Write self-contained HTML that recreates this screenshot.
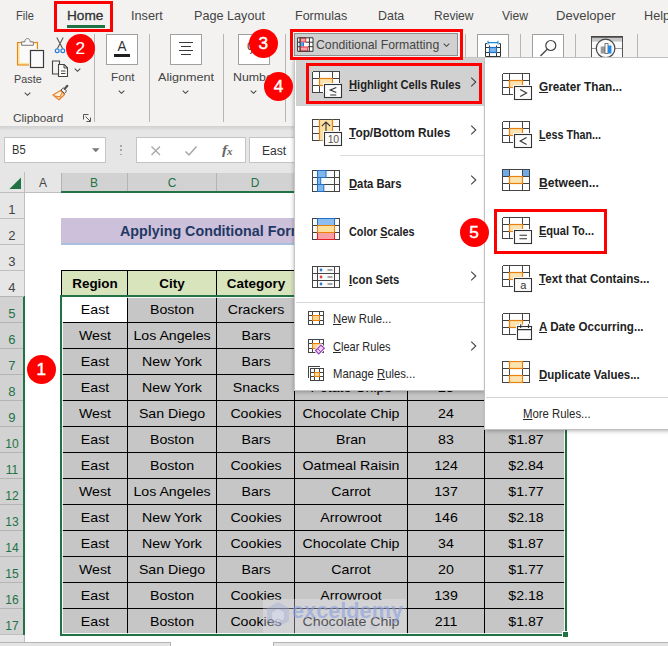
<!DOCTYPE html>
<html><head><meta charset="utf-8"><title>Excel - Conditional Formatting</title>
<style>
html,body{margin:0;padding:0;}
body{width:668px;height:646px;overflow:hidden;background:#fff;font-family:"Liberation Sans",sans-serif;}
#root{position:relative;width:668px;height:646px;overflow:hidden;background:#fff;}
.a{position:absolute;box-sizing:border-box;display:block;}
.t{position:absolute;white-space:nowrap;display:block;}
.t u{text-decoration:underline;text-underline-offset:1px;}

</style></head>
<body>
<div id="root">
<div class="a" style="left:0px;top:0px;width:668px;height:126px;background:#f3f2f1;"></div>
<div class="a" style="left:0px;top:126px;width:668px;height:5px;background:linear-gradient(#d0d0d0,#e6e6e6);"></div>
<span class="t" style="transform:scaleX(0.8703);transform-origin:0 50%;left:15.5px;top:7.2px;font-size:12.7px;line-height:18px;color:#444;font-weight:normal;">File</span>
<span class="t" style="transform:scaleX(1.0726);transform-origin:0 50%;left:66.5px;top:7.2px;font-size:12.7px;line-height:18px;color:#333;font-weight:normal;-webkit-text-stroke:0.3px #333;">Home</span>
<span class="t" style="transform:scaleX(1.0021);transform-origin:0 50%;left:131px;top:7.2px;font-size:12.7px;line-height:18px;color:#444;font-weight:normal;">Insert</span>
<span class="t" style="transform:scaleX(0.9965);transform-origin:0 50%;left:194.3px;top:7.2px;font-size:12.7px;line-height:18px;color:#444;font-weight:normal;">Page Layout</span>
<span class="t" style="transform:scaleX(0.9872);transform-origin:0 50%;left:295.3px;top:7.2px;font-size:12.7px;line-height:18px;color:#444;font-weight:normal;">Formulas</span>
<span class="t" style="transform:scaleX(0.9809);transform-origin:0 50%;left:377.5px;top:7.2px;font-size:12.7px;line-height:18px;color:#444;font-weight:normal;">Data</span>
<span class="t" style="transform:scaleX(0.9493);transform-origin:0 50%;left:433.5px;top:7.2px;font-size:12.7px;line-height:18px;color:#444;font-weight:normal;">Review</span>
<span class="t" style="transform:scaleX(0.9530);transform-origin:0 50%;left:502px;top:7.2px;font-size:12.7px;line-height:18px;color:#444;font-weight:normal;">View</span>
<span class="t" style="transform:scaleX(1.0286);transform-origin:0 50%;left:556.3px;top:7.2px;font-size:12.7px;line-height:18px;color:#444;font-weight:normal;">Developer</span>
<span class="t" style="transform:scaleX(0.9964);transform-origin:0 50%;left:644.3px;top:7.2px;font-size:12.7px;line-height:18px;color:#444;font-weight:normal;">Help</span>
<div class="a" style="left:67px;top:25px;width:38px;height:3px;background:#217346;"></div>
<div class="a" style="left:94px;top:34px;width:1px;height:88px;background:#b6b6b6;"></div>
<div class="a" style="left:149px;top:34px;width:1px;height:88px;background:#b6b6b6;"></div>
<div class="a" style="left:223px;top:34px;width:1px;height:88px;background:#b6b6b6;"></div>
<div class="a" style="left:285px;top:34px;width:1px;height:88px;background:#b6b6b6;"></div>
<div class="a" style="left:465px;top:34px;width:1px;height:24px;background:#b6b6b6;"></div>
<div class="a" style="left:520px;top:34px;width:1px;height:24px;background:#b6b6b6;"></div>
<div class="a" style="left:575px;top:34px;width:1px;height:24px;background:#b6b6b6;"></div>
<div class="a" style="left:637px;top:34px;width:1px;height:24px;background:#b6b6b6;"></div>
<svg class="a" style="left:14px;top:35px;" width="34" height="36" viewBox="0 0 34 36">
<rect x="3.5" y="7.5" width="20" height="22.5" fill="#fbe3a1" stroke="#e8890c" stroke-width="1.1"/>
<rect x="5.7" y="8.6" width="16.6" height="19.2" fill="#fafafa"/>
<path d="M7.6 10.3 V6.9 H10.8 C10.8 2.4 16.2 2.4 16.2 6.9 H19.4 V10.3 Z" fill="#f8f8f8" stroke="#7a7a7a" stroke-width="1"/>
<rect x="15" y="14" width="16" height="20" fill="#f6f5f4"/>
<rect x="16.5" y="15.5" width="13" height="17" fill="#fafafa" stroke="#3a3a3a" stroke-width="1.2"/>
</svg>
<span class="t" style="transform:scaleX(0.9181);transform-origin:0 50%;left:14.3px;top:70.0px;font-size:11.8px;line-height:18px;color:#444;font-weight:normal;">Paste</span>
<svg class="a" style="left:24.0px;top:92px;" width="7" height="4" viewBox="0 0 7 4"><path d="M0.7 0.7 L3.5 3.3 L6.3 0.7" fill="none" stroke="#4a4a4a" stroke-width="1.05"/></svg>
<svg class="a" style="left:53px;top:36px;" width="14" height="19" viewBox="0 0 14 19">
<path d="M3.8 1.5 L9.6 12.6 M10.2 1.5 L4.4 12.6" stroke="#555" stroke-width="1.1" fill="none"/>
<circle cx="4.2" cy="14.8" r="1.9" fill="none" stroke="#2b7cd3" stroke-width="1.2"/>
<circle cx="9.8" cy="14.8" r="1.9" fill="none" stroke="#2b7cd3" stroke-width="1.2"/>
</svg>
<svg class="a" style="left:51px;top:59px;" width="19" height="19" viewBox="0 0 19 19">
<path d="M7.5 15 H1.5 V2 H8.5 V5" fill="none" stroke="#444" stroke-width="1.1"/>
<path d="M7.5 5.5 H13.2 L16.5 8.8 V17.5 H7.5 Z" fill="#fafafa" stroke="#444" stroke-width="1.1"/>
<path d="M13 5.5 V9 H16.5" fill="none" stroke="#444" stroke-width="1"/>
<path d="M10 12 H14.5 M10 14.5 H14.5" stroke="#444" stroke-width="1"/>
</svg>
<svg class="a" style="left:74.0px;top:67.5px;" width="7" height="4" viewBox="0 0 7 4"><path d="M0.7 0.7 L3.5 3.3 L6.3 0.7" fill="none" stroke="#4a4a4a" stroke-width="1.05"/></svg>
<svg class="a" style="left:51px;top:84px;" width="19" height="18" viewBox="0 0 19 18">
<path d="M9.5 6.5 L13.5 10.5 L8 15.8 L2 11 Z" fill="#fdf1e2" stroke="#e8822a" stroke-width="1.3" stroke-linejoin="round"/>
<path d="M3.5 12 L9 12.8 L11 9" fill="none" stroke="#e8822a" stroke-width="1.1"/>
<path d="M10 6 L12.5 3.8 L15.5 7 L13.5 9.5 Z" fill="#f6f6f6" stroke="#555" stroke-width="1"/>
<path d="M13.8 4.8 L16.3 1.8" stroke="#555" stroke-width="2.2" stroke-linecap="round"/>
</svg>
<span class="t" style="transform:scaleX(0.9960);transform-origin:0 50%;left:13px;top:109.0px;font-size:11.8px;line-height:18px;color:#444;font-weight:normal;">Clipboard</span>
<svg class="a" style="left:82px;top:113px;" width="10" height="10" viewBox="0 0 10 10">
<path d="M1.5 6.5 V1.5 H6.5" fill="none" stroke="#555" stroke-width="1"/>
<path d="M3.5 3.5 L8.3 8.3 M8.5 4.5 V8.5 H4.5" fill="none" stroke="#555" stroke-width="1"/>
</svg>
<div class="a" style="left:106.2px;top:34.3px;width:31.5px;height:30.5px;background:#fff;border:1px solid #a0a0a0;"></div>
<span class="t" style="transform:translateX(-50%) scaleX(0.8986);transform-origin:50% 50%;left:122px;top:37.0px;font-size:15px;line-height:18px;color:#333;font-weight:normal;">A</span>
<div class="a" style="left:114.3px;top:53.5px;width:15.5px;height:3px;background:#1e1e1e;"></div>
<span class="t" style="transform:scaleX(0.9954);transform-origin:0 50%;left:110.5px;top:68.0px;font-size:11.8px;line-height:18px;color:#444;font-weight:normal;">Font</span>
<svg class="a" style="left:118.3px;top:90px;" width="7" height="4" viewBox="0 0 7 4"><path d="M0.7 0.7 L3.5 3.3 L6.3 0.7" fill="none" stroke="#4a4a4a" stroke-width="1.05"/></svg>
<div class="a" style="left:170.3px;top:34.3px;width:31.5px;height:30.5px;background:#fff;border:1px solid #a0a0a0;"></div>
<div class="a" style="left:179px;top:42px;width:14px;height:1px;background:#3a3a3a;"></div>
<div class="a" style="left:181px;top:46px;width:10px;height:1px;background:#3a3a3a;"></div>
<div class="a" style="left:179px;top:50px;width:14px;height:1px;background:#3a3a3a;"></div>
<div class="a" style="left:181px;top:54px;width:10px;height:1px;background:#3a3a3a;"></div>
<span class="t" style="transform:scaleX(1.0673);transform-origin:0 50%;left:158px;top:68.0px;font-size:11.8px;line-height:18px;color:#444;font-weight:normal;">Alignment</span>
<svg class="a" style="left:182.3px;top:90px;" width="7" height="4" viewBox="0 0 7 4"><path d="M0.7 0.7 L3.5 3.3 L6.3 0.7" fill="none" stroke="#4a4a4a" stroke-width="1.05"/></svg>
<div class="a" style="left:238.2px;top:34.3px;width:31.5px;height:30.5px;background:#fff;border:1px solid #a0a0a0;"></div>
<span class="t" style="transform:translateX(-50%) scaleX(0.9256);transform-origin:50% 50%;left:254px;top:40.0px;font-size:17px;line-height:18px;color:#444;font-weight:normal;">%</span>
<span class="t" style="transform:scaleX(1.0484);transform-origin:0 50%;left:232.5px;top:68.0px;font-size:11.8px;line-height:18px;color:#444;font-weight:normal;">Number</span>
<svg class="a" style="left:250.3px;top:90px;" width="7" height="4" viewBox="0 0 7 4"><path d="M0.7 0.7 L3.5 3.3 L6.3 0.7" fill="none" stroke="#4a4a4a" stroke-width="1.05"/></svg>
<div class="a" style="left:294px;top:33px;width:164px;height:23px;background:#d0d0d0;border:1px solid #8f8f8f;"></div>
<svg class="a" style="left:297px;top:36.5px;" width="17" height="15" viewBox="0 0 17 15">
<rect x="0.5" y="0.8" width="15.5" height="13.5" fill="#fff"/>
<rect x="3.2" y="1" width="5.6" height="4" fill="#f9a3ab" stroke="#e8202a" stroke-width="0.9"/>
<rect x="3.2" y="5.4" width="3.8" height="4" fill="#1e78d2"/>
<rect x="4.4" y="5.4" width="1.3" height="4" fill="#7fb6ee"/>
<rect x="3.2" y="10" width="7.6" height="4" fill="#f9a3ab" stroke="#e8202a" stroke-width="0.9"/>
<path d="M0.6 0.8 H16 V14.3 H0.6 Z M0.6 5.2 H3 M9 5.2 H16 M0.6 9.7 H3 M11 9.7 H16 M3 0.8 V14.3 M12.4 0.8 V14.3" fill="none" stroke="#333" stroke-width="1"/>
</svg>
<span class="t" style="transform:scaleX(1.0298);transform-origin:0 50%;left:316.3px;top:35.7px;font-size:11.9px;line-height:18px;color:#444;font-weight:normal;">Conditional Formatting</span>
<svg class="a" style="left:443.3px;top:43px;" width="7" height="4" viewBox="0 0 7 4"><path d="M0.7 0.7 L3.5 3.3 L6.3 0.7" fill="none" stroke="#4a4a4a" stroke-width="1.05"/></svg>
<div class="a" style="left:477px;top:34.3px;width:32px;height:30.5px;background:#fff;border:1px solid #a0a0a0;"></div>
<svg class="a" style="left:484px;top:38px;" width="18" height="20" viewBox="0 0 18 20">
<path d="M4 4.6 H14 M4 2.8 V6.4 M14 2.8 V6.4" stroke="#1e8ad6" stroke-width="1.1" fill="none"/>
<path d="M3 5.6 H1.5 V18.5 H16.5 V5.6 H15 M1.5 9.5 H16.5 M1.5 14.5 H16.5 M5.5 7.5 V18.5 M12.5 7.5 V18.5" fill="none" stroke="#333" stroke-width="1"/>
<rect x="5.5" y="9.5" width="7" height="5" fill="#7db4ec" stroke="#1e6fc8" stroke-width="1.2"/>
</svg>
<div class="a" style="left:532.3px;top:34.3px;width:31.5px;height:30.5px;background:#fff;border:1px solid #a0a0a0;"></div>
<svg class="a" style="left:538px;top:38px;" width="20" height="20" viewBox="0 0 20 20">
<circle cx="12.8" cy="7.5" r="5" fill="none" stroke="#444" stroke-width="1.2"/>
<path d="M9.2 11.2 L2.5 18" stroke="#444" stroke-width="1.3"/>
</svg>
<svg class="a" style="left:590px;top:36px;" width="34" height="24" viewBox="0 0 34 24">
<rect x="1.5" y="0.5" width="31" height="24" fill="#fafafa" stroke="#555" stroke-width="1"/>
<rect x="2" y="1" width="30" height="4.6" fill="#c6c6c6"/>
<path d="M1 0.9 H33" stroke="#444" stroke-width="1.6"/>
<path d="M2 12.5 H32" stroke="#9a9a9a" stroke-width="1"/>
<circle cx="15.6" cy="12.4" r="9.3" fill="#fafafa" stroke="#444" stroke-width="1.2"/>
<rect x="10.7" y="10.5" width="4.3" height="7" fill="#9a9a9a"/>
<rect x="15" y="7.6" width="3" height="9.9" fill="#fff" stroke="#555" stroke-width="0.8"/>
<rect x="18" y="9.5" width="3.4" height="8" fill="#1e8ae6"/>
</svg>
<div class="a" style="left:0px;top:130px;width:668px;height:42px;background:#e6e6e6;"></div>
<div class="a" style="left:4px;top:137px;width:102px;height:26px;background:#fff;border:1px solid #c4c4c4;"></div>
<span class="t" style="transform:scaleX(0.8973);transform-origin:0 50%;left:11.8px;top:141.4px;font-size:12.4px;line-height:18px;color:#333;font-weight:normal;">B5</span>
<svg class="a" style="left:91.5px;top:147.5px;" width="8" height="5" viewBox="0 0 8 5"><path d="M0 0.3 H7.6 L3.8 4.3 Z" fill="#777"/></svg>
<div class="a" style="left:120.4px;top:145.2px;width:1.4px;height:1.4px;background:#a8a8a8;"></div>
<div class="a" style="left:120.4px;top:149.4px;width:1.4px;height:1.4px;background:#a8a8a8;"></div>
<div class="a" style="left:120.4px;top:153.6px;width:1.4px;height:1.4px;background:#a8a8a8;"></div>
<div class="a" style="left:136px;top:137px;width:110px;height:26px;background:#fff;border:1px solid #c4c4c4;"></div>
<svg class="a" style="left:150px;top:144.5px;" width="12" height="12" viewBox="0 0 12 12"><path d="M1.5 1.5 L10 10 M10 1.5 L1.5 10" stroke="#a6a6a6" stroke-width="1.3" fill="none"/></svg>
<svg class="a" style="left:184px;top:144.5px;" width="14" height="12" viewBox="0 0 14 12"><path d="M1.5 6.5 L5 10 L12.5 1.5" stroke="#a6a6a6" stroke-width="1.5" fill="none"/></svg>
<span class="t" style="transform:scaleX(1.1971);transform-origin:0 50%;left:222.3px;top:140.6px;font-size:13px;line-height:18px;color:#666;font-weight:bold;font-family:'Liberation Serif',serif;"><i>f</i></span>
<span class="t" style="transform:scaleX(1.1000);transform-origin:0 50%;left:226.8px;top:142.5px;font-size:10px;line-height:18px;color:#666;font-weight:bold;font-family:'Liberation Serif',serif;"><i>x</i></span>
<div class="a" style="left:249px;top:137px;width:430px;height:26px;background:#fff;border:1px solid #c4c4c4;"></div>
<span class="t" style="transform:scaleX(0.9834);transform-origin:0 50%;left:261.5px;top:142.24px;font-size:12.3px;line-height:18px;color:#333;font-weight:normal;">East</span>
<div class="a" style="left:0px;top:172px;width:668px;height:21px;background:#e6e6e6;"></div>
<div class="a" style="left:0px;top:192px;width:668px;height:1px;background:#bfbfbf;"></div>
<div class="a" style="left:61px;top:173px;width:506px;height:18px;background:#d2d2d2;"></div>
<div class="a" style="left:61px;top:191px;width:506px;height:2px;background:#217346;"></div>
<svg class="a" style="left:8px;top:176px;" width="15" height="14" viewBox="0 0 15 14"><path d="M13 1.6 V13 H1.4 Z" fill="#217346"/></svg>
<span class="t" style="transform:translateX(-50%) scaleX(0.9700);transform-origin:50% 50%;left:43.2px;top:174.34px;font-size:12.3px;line-height:18px;color:#444;font-weight:normal;">A</span>
<div class="a" style="left:61px;top:173px;width:1px;height:18px;background:#b4b4b4;"></div>
<span class="t" style="transform:translateX(-50%) scaleX(0.9700);transform-origin:50% 50%;left:94.2px;top:174.34px;font-size:12.3px;line-height:18px;color:#217346;font-weight:normal;">B</span>
<div class="a" style="left:127px;top:173px;width:1px;height:18px;background:#b4b4b4;"></div>
<span class="t" style="transform:translateX(-50%) scaleX(0.9700);transform-origin:50% 50%;left:171.7px;top:174.34px;font-size:12.3px;line-height:18px;color:#217346;font-weight:normal;">C</span>
<div class="a" style="left:216px;top:173px;width:1px;height:18px;background:#b4b4b4;"></div>
<span class="t" style="transform:translateX(-50%) scaleX(0.9700);transform-origin:50% 50%;left:255.2px;top:174.34px;font-size:12.3px;line-height:18px;color:#217346;font-weight:normal;">D</span>
<div class="a" style="left:294px;top:173px;width:1px;height:18px;background:#b4b4b4;"></div>
<span class="t" style="transform:translateX(-50%) scaleX(0.9700);transform-origin:50% 50%;left:350.7px;top:174.34px;font-size:12.3px;line-height:18px;color:#217346;font-weight:normal;">E</span>
<div class="a" style="left:407px;top:173px;width:1px;height:18px;background:#b4b4b4;"></div>
<span class="t" style="transform:translateX(-50%) scaleX(0.9700);transform-origin:50% 50%;left:445.7px;top:174.34px;font-size:12.3px;line-height:18px;color:#217346;font-weight:normal;">F</span>
<div class="a" style="left:484px;top:173px;width:1px;height:18px;background:#b4b4b4;"></div>
<span class="t" style="transform:translateX(-50%) scaleX(0.9700);transform-origin:50% 50%;left:525.2px;top:174.34px;font-size:12.3px;line-height:18px;color:#217346;font-weight:normal;">G</span>
<div class="a" style="left:566px;top:173px;width:1px;height:18px;background:#b4b4b4;"></div>
<div class="a" style="left:0px;top:193px;width:24px;height:453px;background:#e6e6e6;"></div>
<div class="a" style="left:0px;top:296px;width:24px;height:339px;background:#d2d2d2;"></div>
<div class="a" style="left:24px;top:172px;width:1px;height:474px;background:#bfbfbf;"></div>
<div class="a" style="left:23px;top:296px;width:2px;height:339px;background:#217346;"></div>
<div class="a" style="left:0px;top:218px;width:24px;height:1px;background:#bfbfbf;"></div>
<span class="t" style="transform:translateX(-50%) scaleX(1.0600);transform-origin:50% 50%;left:11.8px;top:200.54px;font-size:12.3px;line-height:18px;color:#444;font-weight:normal;">1</span>
<div class="a" style="left:0px;top:244px;width:24px;height:1px;background:#bfbfbf;"></div>
<span class="t" style="transform:translateX(-50%) scaleX(1.0600);transform-origin:50% 50%;left:11.8px;top:226.54px;font-size:12.3px;line-height:18px;color:#444;font-weight:normal;">2</span>
<div class="a" style="left:0px;top:270px;width:24px;height:1px;background:#bfbfbf;"></div>
<span class="t" style="transform:translateX(-50%) scaleX(1.0600);transform-origin:50% 50%;left:11.8px;top:252.54px;font-size:12.3px;line-height:18px;color:#444;font-weight:normal;">3</span>
<div class="a" style="left:0px;top:296px;width:24px;height:1px;background:#b4b4b4;"></div>
<span class="t" style="transform:translateX(-50%) scaleX(1.0600);transform-origin:50% 50%;left:11.8px;top:278.54px;font-size:12.3px;line-height:18px;color:#444;font-weight:normal;">4</span>
<div class="a" style="left:0px;top:322px;width:23px;height:1px;background:#b4b4b4;"></div>
<span class="t" style="transform:translateX(-50%) scaleX(1.0600);transform-origin:50% 50%;left:11.8px;top:304.54px;font-size:12.3px;line-height:18px;color:#217346;font-weight:normal;">5</span>
<div class="a" style="left:0px;top:348px;width:23px;height:1px;background:#b4b4b4;"></div>
<span class="t" style="transform:translateX(-50%) scaleX(1.0600);transform-origin:50% 50%;left:11.8px;top:330.54px;font-size:12.3px;line-height:18px;color:#217346;font-weight:normal;">6</span>
<div class="a" style="left:0px;top:374px;width:23px;height:1px;background:#b4b4b4;"></div>
<span class="t" style="transform:translateX(-50%) scaleX(1.0600);transform-origin:50% 50%;left:11.8px;top:356.54px;font-size:12.3px;line-height:18px;color:#217346;font-weight:normal;">7</span>
<div class="a" style="left:0px;top:400px;width:23px;height:1px;background:#b4b4b4;"></div>
<span class="t" style="transform:translateX(-50%) scaleX(1.0600);transform-origin:50% 50%;left:11.8px;top:382.54px;font-size:12.3px;line-height:18px;color:#217346;font-weight:normal;">8</span>
<div class="a" style="left:0px;top:426px;width:23px;height:1px;background:#b4b4b4;"></div>
<span class="t" style="transform:translateX(-50%) scaleX(1.0600);transform-origin:50% 50%;left:11.8px;top:408.54px;font-size:12.3px;line-height:18px;color:#217346;font-weight:normal;">9</span>
<div class="a" style="left:0px;top:452px;width:23px;height:1px;background:#b4b4b4;"></div>
<span class="t" style="transform:translateX(-50%) scaleX(0.9800);transform-origin:50% 50%;left:12.4px;top:434.54px;font-size:12.3px;line-height:18px;color:#217346;font-weight:normal;">10</span>
<div class="a" style="left:0px;top:478px;width:23px;height:1px;background:#b4b4b4;"></div>
<span class="t" style="transform:translateX(-50%) scaleX(0.9800);transform-origin:50% 50%;left:12.4px;top:460.54px;font-size:12.3px;line-height:18px;color:#217346;font-weight:normal;">11</span>
<div class="a" style="left:0px;top:504px;width:23px;height:1px;background:#b4b4b4;"></div>
<span class="t" style="transform:translateX(-50%) scaleX(0.9800);transform-origin:50% 50%;left:12.4px;top:486.54px;font-size:12.3px;line-height:18px;color:#217346;font-weight:normal;">12</span>
<div class="a" style="left:0px;top:530px;width:23px;height:1px;background:#b4b4b4;"></div>
<span class="t" style="transform:translateX(-50%) scaleX(0.9800);transform-origin:50% 50%;left:12.4px;top:512.54px;font-size:12.3px;line-height:18px;color:#217346;font-weight:normal;">13</span>
<div class="a" style="left:0px;top:556px;width:23px;height:1px;background:#b4b4b4;"></div>
<span class="t" style="transform:translateX(-50%) scaleX(0.9800);transform-origin:50% 50%;left:12.4px;top:538.54px;font-size:12.3px;line-height:18px;color:#217346;font-weight:normal;">14</span>
<div class="a" style="left:0px;top:582px;width:23px;height:1px;background:#b4b4b4;"></div>
<span class="t" style="transform:translateX(-50%) scaleX(0.9800);transform-origin:50% 50%;left:12.4px;top:564.54px;font-size:12.3px;line-height:18px;color:#217346;font-weight:normal;">15</span>
<div class="a" style="left:0px;top:608px;width:23px;height:1px;background:#b4b4b4;"></div>
<span class="t" style="transform:translateX(-50%) scaleX(0.9800);transform-origin:50% 50%;left:12.4px;top:590.54px;font-size:12.3px;line-height:18px;color:#217346;font-weight:normal;">16</span>
<div class="a" style="left:0px;top:634px;width:23px;height:1px;background:#bfbfbf;"></div>
<span class="t" style="transform:translateX(-50%) scaleX(0.9800);transform-origin:50% 50%;left:12.4px;top:616.54px;font-size:12.3px;line-height:18px;color:#217346;font-weight:normal;">17</span>
<div class="a" style="left:0px;top:660px;width:24px;height:1px;background:#bfbfbf;"></div>
<div class="a" style="left:61px;top:218px;width:506px;height:25px;background:#ccc0da;"></div>
<div class="a" style="left:61px;top:243px;width:506px;height:2px;background:#a9c0de;"></div>
<span class="t" style="transform:scaleX(0.9221);transform-origin:0 50%;left:119.6px;top:222.1px;font-size:15.5px;line-height:18px;color:#1f3864;font-weight:bold;">Applying Conditional Formatting Based on Another Cell</span>
<div class="a" style="left:61px;top:270px;width:505px;height:26px;background:#d8e4bc;"></div>
<div class="a" style="left:61px;top:296px;width:505px;height:339px;background:#c6c6c6;"></div>
<div class="a" style="left:62px;top:297px;width:65px;height:25px;background:#fff;"></div>
<div class="a" style="left:61px;top:270px;width:505px;height:1px;background:#000;"></div>
<div class="a" style="left:61px;top:296px;width:505px;height:1px;background:#000;"></div>
<div class="a" style="left:61px;top:322px;width:505px;height:1px;background:#000;"></div>
<div class="a" style="left:61px;top:348px;width:505px;height:1px;background:#000;"></div>
<div class="a" style="left:61px;top:374px;width:505px;height:1px;background:#000;"></div>
<div class="a" style="left:61px;top:400px;width:505px;height:1px;background:#000;"></div>
<div class="a" style="left:61px;top:426px;width:505px;height:1px;background:#000;"></div>
<div class="a" style="left:61px;top:452px;width:505px;height:1px;background:#000;"></div>
<div class="a" style="left:61px;top:478px;width:505px;height:1px;background:#000;"></div>
<div class="a" style="left:61px;top:504px;width:505px;height:1px;background:#000;"></div>
<div class="a" style="left:61px;top:530px;width:505px;height:1px;background:#000;"></div>
<div class="a" style="left:61px;top:556px;width:505px;height:1px;background:#000;"></div>
<div class="a" style="left:61px;top:582px;width:505px;height:1px;background:#000;"></div>
<div class="a" style="left:61px;top:608px;width:505px;height:1px;background:#000;"></div>
<div class="a" style="left:61px;top:634px;width:505px;height:1px;background:#000;"></div>
<div class="a" style="left:61px;top:270px;width:1px;height:365px;background:#000;"></div>
<div class="a" style="left:127px;top:270px;width:1px;height:365px;background:#000;"></div>
<div class="a" style="left:216px;top:270px;width:1px;height:365px;background:#000;"></div>
<div class="a" style="left:294px;top:270px;width:1px;height:365px;background:#000;"></div>
<div class="a" style="left:407px;top:270px;width:1px;height:365px;background:#000;"></div>
<div class="a" style="left:484px;top:270px;width:1px;height:365px;background:#000;"></div>
<div class="a" style="left:565px;top:270px;width:1px;height:365px;background:#000;"></div>
<span class="t" style="transform:translateX(-50%) scaleX(1.0200);transform-origin:50% 50%;left:94.8px;top:275.33px;font-size:13.2px;line-height:18px;color:#000;font-weight:bold;">Region</span>
<span class="t" style="transform:translateX(-50%) scaleX(1.0200);transform-origin:50% 50%;left:172.3px;top:275.33px;font-size:13.2px;line-height:18px;color:#000;font-weight:bold;">City</span>
<span class="t" style="transform:translateX(-50%) scaleX(1.0200);transform-origin:50% 50%;left:255.8px;top:275.33px;font-size:13.2px;line-height:18px;color:#000;font-weight:bold;">Category</span>
<span class="t" style="transform:translateX(-50%) scaleX(1.0200);transform-origin:50% 50%;left:351.3px;top:275.33px;font-size:13.2px;line-height:18px;color:#000;font-weight:bold;">Product</span>
<span class="t" style="transform:translateX(-50%) scaleX(1.0200);transform-origin:50% 50%;left:446.3px;top:275.33px;font-size:13.2px;line-height:18px;color:#000;font-weight:bold;">Quantity</span>
<span class="t" style="transform:translateX(-50%) scaleX(1.0200);transform-origin:50% 50%;left:525.8px;top:275.33px;font-size:13.2px;line-height:18px;color:#000;font-weight:bold;">Unit Price</span>
<span class="t" style="transform:translateX(-50%) scaleX(1.0750);transform-origin:50% 50%;left:94.8px;top:301.13px;font-size:13.2px;line-height:18px;color:#000;font-weight:normal;">East</span>
<span class="t" style="transform:translateX(-50%) scaleX(1.0750);transform-origin:50% 50%;left:172.3px;top:301.13px;font-size:13.2px;line-height:18px;color:#000;font-weight:normal;">Boston</span>
<span class="t" style="transform:translateX(-50%) scaleX(1.0750);transform-origin:50% 50%;left:255.8px;top:301.13px;font-size:13.2px;line-height:18px;color:#000;font-weight:normal;">Crackers</span>
<span class="t" style="transform:translateX(-50%) scaleX(1.0750);transform-origin:50% 50%;left:351.3px;top:301.13px;font-size:13.2px;line-height:18px;color:#000;font-weight:normal;">Whole Wheat</span>
<span class="t" style="transform:translateX(-50%) scaleX(1.0750);transform-origin:50% 50%;left:446.3px;top:301.13px;font-size:13.2px;line-height:18px;color:#000;font-weight:normal;">30</span>
<span class="t" style="transform:translateX(-50%) scaleX(1.0750);transform-origin:50% 50%;left:525.8px;top:301.13px;font-size:13.2px;line-height:18px;color:#000;font-weight:normal;">$3.49</span>
<span class="t" style="transform:translateX(-50%) scaleX(1.0750);transform-origin:50% 50%;left:94.8px;top:327.13px;font-size:13.2px;line-height:18px;color:#000;font-weight:normal;">West</span>
<span class="t" style="transform:translateX(-50%) scaleX(1.0750);transform-origin:50% 50%;left:172.3px;top:327.13px;font-size:13.2px;line-height:18px;color:#000;font-weight:normal;">Los Angeles</span>
<span class="t" style="transform:translateX(-50%) scaleX(1.0750);transform-origin:50% 50%;left:255.8px;top:327.13px;font-size:13.2px;line-height:18px;color:#000;font-weight:normal;">Bars</span>
<span class="t" style="transform:translateX(-50%) scaleX(1.0750);transform-origin:50% 50%;left:351.3px;top:327.13px;font-size:13.2px;line-height:18px;color:#000;font-weight:normal;">Carrot</span>
<span class="t" style="transform:translateX(-50%) scaleX(1.0750);transform-origin:50% 50%;left:446.3px;top:327.13px;font-size:13.2px;line-height:18px;color:#000;font-weight:normal;">40</span>
<span class="t" style="transform:translateX(-50%) scaleX(1.0750);transform-origin:50% 50%;left:525.8px;top:327.13px;font-size:13.2px;line-height:18px;color:#000;font-weight:normal;">$1.77</span>
<span class="t" style="transform:translateX(-50%) scaleX(1.0750);transform-origin:50% 50%;left:94.8px;top:353.13px;font-size:13.2px;line-height:18px;color:#000;font-weight:normal;">East</span>
<span class="t" style="transform:translateX(-50%) scaleX(1.0750);transform-origin:50% 50%;left:172.3px;top:353.13px;font-size:13.2px;line-height:18px;color:#000;font-weight:normal;">New York</span>
<span class="t" style="transform:translateX(-50%) scaleX(1.0750);transform-origin:50% 50%;left:255.8px;top:353.13px;font-size:13.2px;line-height:18px;color:#000;font-weight:normal;">Bars</span>
<span class="t" style="transform:translateX(-50%) scaleX(1.0750);transform-origin:50% 50%;left:351.3px;top:353.13px;font-size:13.2px;line-height:18px;color:#000;font-weight:normal;">Bran</span>
<span class="t" style="transform:translateX(-50%) scaleX(1.0750);transform-origin:50% 50%;left:446.3px;top:353.13px;font-size:13.2px;line-height:18px;color:#000;font-weight:normal;">51</span>
<span class="t" style="transform:translateX(-50%) scaleX(1.0750);transform-origin:50% 50%;left:525.8px;top:353.13px;font-size:13.2px;line-height:18px;color:#000;font-weight:normal;">$1.87</span>
<span class="t" style="transform:translateX(-50%) scaleX(1.0750);transform-origin:50% 50%;left:94.8px;top:379.13px;font-size:13.2px;line-height:18px;color:#000;font-weight:normal;">East</span>
<span class="t" style="transform:translateX(-50%) scaleX(1.0750);transform-origin:50% 50%;left:172.3px;top:379.13px;font-size:13.2px;line-height:18px;color:#000;font-weight:normal;">New York</span>
<span class="t" style="transform:translateX(-50%) scaleX(1.0750);transform-origin:50% 50%;left:255.8px;top:379.13px;font-size:13.2px;line-height:18px;color:#000;font-weight:normal;">Snacks</span>
<span class="t" style="transform:translateX(-50%) scaleX(1.0750);transform-origin:50% 50%;left:351.3px;top:379.13px;font-size:13.2px;line-height:18px;color:#000;font-weight:normal;">Potato Chips</span>
<span class="t" style="transform:translateX(-50%) scaleX(1.0750);transform-origin:50% 50%;left:446.3px;top:379.13px;font-size:13.2px;line-height:18px;color:#000;font-weight:normal;">23</span>
<span class="t" style="transform:translateX(-50%) scaleX(1.0750);transform-origin:50% 50%;left:525.8px;top:379.13px;font-size:13.2px;line-height:18px;color:#000;font-weight:normal;">$1.68</span>
<span class="t" style="transform:translateX(-50%) scaleX(1.0750);transform-origin:50% 50%;left:94.8px;top:405.13px;font-size:13.2px;line-height:18px;color:#000;font-weight:normal;">West</span>
<span class="t" style="transform:translateX(-50%) scaleX(1.0750);transform-origin:50% 50%;left:172.3px;top:405.13px;font-size:13.2px;line-height:18px;color:#000;font-weight:normal;">San Diego</span>
<span class="t" style="transform:translateX(-50%) scaleX(1.0750);transform-origin:50% 50%;left:255.8px;top:405.13px;font-size:13.2px;line-height:18px;color:#000;font-weight:normal;">Cookies</span>
<span class="t" style="transform:translateX(-50%) scaleX(1.0750);transform-origin:50% 50%;left:351.3px;top:405.13px;font-size:13.2px;line-height:18px;color:#000;font-weight:normal;">Chocolate Chip</span>
<span class="t" style="transform:translateX(-50%) scaleX(1.0750);transform-origin:50% 50%;left:446.3px;top:405.13px;font-size:13.2px;line-height:18px;color:#000;font-weight:normal;">24</span>
<span class="t" style="transform:translateX(-50%) scaleX(1.0750);transform-origin:50% 50%;left:525.8px;top:405.13px;font-size:13.2px;line-height:18px;color:#000;font-weight:normal;">$1.87</span>
<span class="t" style="transform:translateX(-50%) scaleX(1.0750);transform-origin:50% 50%;left:94.8px;top:431.13px;font-size:13.2px;line-height:18px;color:#000;font-weight:normal;">East</span>
<span class="t" style="transform:translateX(-50%) scaleX(1.0750);transform-origin:50% 50%;left:172.3px;top:431.13px;font-size:13.2px;line-height:18px;color:#000;font-weight:normal;">Boston</span>
<span class="t" style="transform:translateX(-50%) scaleX(1.0750);transform-origin:50% 50%;left:255.8px;top:431.13px;font-size:13.2px;line-height:18px;color:#000;font-weight:normal;">Bars</span>
<span class="t" style="transform:translateX(-50%) scaleX(1.0750);transform-origin:50% 50%;left:351.3px;top:431.13px;font-size:13.2px;line-height:18px;color:#000;font-weight:normal;">Bran</span>
<span class="t" style="transform:translateX(-50%) scaleX(1.0750);transform-origin:50% 50%;left:446.3px;top:431.13px;font-size:13.2px;line-height:18px;color:#000;font-weight:normal;">83</span>
<span class="t" style="transform:translateX(-50%) scaleX(1.0750);transform-origin:50% 50%;left:525.8px;top:431.13px;font-size:13.2px;line-height:18px;color:#000;font-weight:normal;">$1.87</span>
<span class="t" style="transform:translateX(-50%) scaleX(1.0750);transform-origin:50% 50%;left:94.8px;top:457.13px;font-size:13.2px;line-height:18px;color:#000;font-weight:normal;">East</span>
<span class="t" style="transform:translateX(-50%) scaleX(1.0750);transform-origin:50% 50%;left:172.3px;top:457.13px;font-size:13.2px;line-height:18px;color:#000;font-weight:normal;">Boston</span>
<span class="t" style="transform:translateX(-50%) scaleX(1.0750);transform-origin:50% 50%;left:255.8px;top:457.13px;font-size:13.2px;line-height:18px;color:#000;font-weight:normal;">Cookies</span>
<span class="t" style="transform:translateX(-50%) scaleX(1.0750);transform-origin:50% 50%;left:351.3px;top:457.13px;font-size:13.2px;line-height:18px;color:#000;font-weight:normal;">Oatmeal Raisin</span>
<span class="t" style="transform:translateX(-50%) scaleX(1.0750);transform-origin:50% 50%;left:446.3px;top:457.13px;font-size:13.2px;line-height:18px;color:#000;font-weight:normal;">124</span>
<span class="t" style="transform:translateX(-50%) scaleX(1.0750);transform-origin:50% 50%;left:525.8px;top:457.13px;font-size:13.2px;line-height:18px;color:#000;font-weight:normal;">$2.84</span>
<span class="t" style="transform:translateX(-50%) scaleX(1.0750);transform-origin:50% 50%;left:94.8px;top:483.13px;font-size:13.2px;line-height:18px;color:#000;font-weight:normal;">West</span>
<span class="t" style="transform:translateX(-50%) scaleX(1.0750);transform-origin:50% 50%;left:172.3px;top:483.13px;font-size:13.2px;line-height:18px;color:#000;font-weight:normal;">Los Angeles</span>
<span class="t" style="transform:translateX(-50%) scaleX(1.0750);transform-origin:50% 50%;left:255.8px;top:483.13px;font-size:13.2px;line-height:18px;color:#000;font-weight:normal;">Bars</span>
<span class="t" style="transform:translateX(-50%) scaleX(1.0750);transform-origin:50% 50%;left:351.3px;top:483.13px;font-size:13.2px;line-height:18px;color:#000;font-weight:normal;">Carrot</span>
<span class="t" style="transform:translateX(-50%) scaleX(1.0750);transform-origin:50% 50%;left:446.3px;top:483.13px;font-size:13.2px;line-height:18px;color:#000;font-weight:normal;">137</span>
<span class="t" style="transform:translateX(-50%) scaleX(1.0750);transform-origin:50% 50%;left:525.8px;top:483.13px;font-size:13.2px;line-height:18px;color:#000;font-weight:normal;">$1.77</span>
<span class="t" style="transform:translateX(-50%) scaleX(1.0750);transform-origin:50% 50%;left:94.8px;top:509.13px;font-size:13.2px;line-height:18px;color:#000;font-weight:normal;">East</span>
<span class="t" style="transform:translateX(-50%) scaleX(1.0750);transform-origin:50% 50%;left:172.3px;top:509.13px;font-size:13.2px;line-height:18px;color:#000;font-weight:normal;">New York</span>
<span class="t" style="transform:translateX(-50%) scaleX(1.0750);transform-origin:50% 50%;left:255.8px;top:509.13px;font-size:13.2px;line-height:18px;color:#000;font-weight:normal;">Cookies</span>
<span class="t" style="transform:translateX(-50%) scaleX(1.0750);transform-origin:50% 50%;left:351.3px;top:509.13px;font-size:13.2px;line-height:18px;color:#000;font-weight:normal;">Arrowroot</span>
<span class="t" style="transform:translateX(-50%) scaleX(1.0750);transform-origin:50% 50%;left:446.3px;top:509.13px;font-size:13.2px;line-height:18px;color:#000;font-weight:normal;">146</span>
<span class="t" style="transform:translateX(-50%) scaleX(1.0750);transform-origin:50% 50%;left:525.8px;top:509.13px;font-size:13.2px;line-height:18px;color:#000;font-weight:normal;">$2.18</span>
<span class="t" style="transform:translateX(-50%) scaleX(1.0750);transform-origin:50% 50%;left:94.8px;top:535.13px;font-size:13.2px;line-height:18px;color:#000;font-weight:normal;">East</span>
<span class="t" style="transform:translateX(-50%) scaleX(1.0750);transform-origin:50% 50%;left:172.3px;top:535.13px;font-size:13.2px;line-height:18px;color:#000;font-weight:normal;">New York</span>
<span class="t" style="transform:translateX(-50%) scaleX(1.0750);transform-origin:50% 50%;left:255.8px;top:535.13px;font-size:13.2px;line-height:18px;color:#000;font-weight:normal;">Cookies</span>
<span class="t" style="transform:translateX(-50%) scaleX(1.0750);transform-origin:50% 50%;left:351.3px;top:535.13px;font-size:13.2px;line-height:18px;color:#000;font-weight:normal;">Chocolate Chip</span>
<span class="t" style="transform:translateX(-50%) scaleX(1.0750);transform-origin:50% 50%;left:446.3px;top:535.13px;font-size:13.2px;line-height:18px;color:#000;font-weight:normal;">34</span>
<span class="t" style="transform:translateX(-50%) scaleX(1.0750);transform-origin:50% 50%;left:525.8px;top:535.13px;font-size:13.2px;line-height:18px;color:#000;font-weight:normal;">$1.87</span>
<span class="t" style="transform:translateX(-50%) scaleX(1.0750);transform-origin:50% 50%;left:94.8px;top:561.13px;font-size:13.2px;line-height:18px;color:#000;font-weight:normal;">West</span>
<span class="t" style="transform:translateX(-50%) scaleX(1.0750);transform-origin:50% 50%;left:172.3px;top:561.13px;font-size:13.2px;line-height:18px;color:#000;font-weight:normal;">San Diego</span>
<span class="t" style="transform:translateX(-50%) scaleX(1.0750);transform-origin:50% 50%;left:255.8px;top:561.13px;font-size:13.2px;line-height:18px;color:#000;font-weight:normal;">Bars</span>
<span class="t" style="transform:translateX(-50%) scaleX(1.0750);transform-origin:50% 50%;left:351.3px;top:561.13px;font-size:13.2px;line-height:18px;color:#000;font-weight:normal;">Carrot</span>
<span class="t" style="transform:translateX(-50%) scaleX(1.0750);transform-origin:50% 50%;left:446.3px;top:561.13px;font-size:13.2px;line-height:18px;color:#000;font-weight:normal;">20</span>
<span class="t" style="transform:translateX(-50%) scaleX(1.0750);transform-origin:50% 50%;left:525.8px;top:561.13px;font-size:13.2px;line-height:18px;color:#000;font-weight:normal;">$1.77</span>
<span class="t" style="transform:translateX(-50%) scaleX(1.0750);transform-origin:50% 50%;left:94.8px;top:587.13px;font-size:13.2px;line-height:18px;color:#000;font-weight:normal;">East</span>
<span class="t" style="transform:translateX(-50%) scaleX(1.0750);transform-origin:50% 50%;left:172.3px;top:587.13px;font-size:13.2px;line-height:18px;color:#000;font-weight:normal;">Boston</span>
<span class="t" style="transform:translateX(-50%) scaleX(1.0750);transform-origin:50% 50%;left:255.8px;top:587.13px;font-size:13.2px;line-height:18px;color:#000;font-weight:normal;">Cookies</span>
<span class="t" style="transform:translateX(-50%) scaleX(1.0750);transform-origin:50% 50%;left:351.3px;top:587.13px;font-size:13.2px;line-height:18px;color:#000;font-weight:normal;">Arrowroot</span>
<span class="t" style="transform:translateX(-50%) scaleX(1.0750);transform-origin:50% 50%;left:446.3px;top:587.13px;font-size:13.2px;line-height:18px;color:#000;font-weight:normal;">139</span>
<span class="t" style="transform:translateX(-50%) scaleX(1.0750);transform-origin:50% 50%;left:525.8px;top:587.13px;font-size:13.2px;line-height:18px;color:#000;font-weight:normal;">$2.18</span>
<span class="t" style="transform:translateX(-50%) scaleX(1.0750);transform-origin:50% 50%;left:94.8px;top:613.13px;font-size:13.2px;line-height:18px;color:#000;font-weight:normal;">East</span>
<span class="t" style="transform:translateX(-50%) scaleX(1.0750);transform-origin:50% 50%;left:172.3px;top:613.13px;font-size:13.2px;line-height:18px;color:#000;font-weight:normal;">Boston</span>
<span class="t" style="transform:translateX(-50%) scaleX(1.0750);transform-origin:50% 50%;left:255.8px;top:613.13px;font-size:13.2px;line-height:18px;color:#000;font-weight:normal;">Cookies</span>
<span class="t" style="transform:translateX(-50%) scaleX(1.0750);transform-origin:50% 50%;left:351.3px;top:613.13px;font-size:13.2px;line-height:18px;color:#000;font-weight:normal;">Chocolate Chip</span>
<span class="t" style="transform:translateX(-50%) scaleX(1.0750);transform-origin:50% 50%;left:446.3px;top:613.13px;font-size:13.2px;line-height:18px;color:#000;font-weight:normal;">211</span>
<span class="t" style="transform:translateX(-50%) scaleX(1.0750);transform-origin:50% 50%;left:525.8px;top:613.13px;font-size:13.2px;line-height:18px;color:#000;font-weight:normal;">$1.87</span>
<div class="a" style="left:60px;top:295px;width:507px;height:341px;border:2px solid #217346;"></div>
<div class="a" style="left:62px;top:297px;width:503px;height:337px;border:1px solid rgba(255,255,255,0.85);"></div>
<div class="a" style="left:562px;top:631px;width:7px;height:7px;background:#217346;border:1px solid #fff;"></div>
<div class="a" style="left:262.5px;top:598.5px;width:143px;height:35px;background:rgba(236,238,246,0.33);"></div>
<svg class="a" style="left:265px;top:600px;" width="27" height="30" viewBox="0 0 27 30">
<path d="M13 2 L24 8 V21 L13 27 L2 21 V8 Z" fill="rgba(160,172,212,0.4)"/>
<path d="M13 9 L19 12.5 V19 L13 22.5 L7 19 V12.5 Z" fill="rgba(225,228,240,0.6)"/>
</svg>
<span class="t" style="transform:scaleX(0.9864);transform-origin:0 50%;left:292.3px;top:598.0px;font-size:22px;line-height:26px;color:rgba(140,158,222,0.62);font-weight:bold;">exceldemy</span>
<span class="t" style="transform:scaleX(1.2778);transform-origin:0 50%;left:307px;top:622.5px;font-size:6.5px;line-height:8px;color:rgba(150,165,215,0.3);font-weight:normal;">EXCEL · DATA · BI</span>
<div class="a" style="left:0px;top:642px;width:171px;height:4px;background:#e4e4e4;border-top:1px solid #b4b4b4;border-right:1px solid #b4b4b4;"></div>
<div class="a" style="left:273px;top:642px;width:395px;height:4px;background:#e4e4e4;border-top:1px solid #b4b4b4;border-left:1px solid #b4b4b4;"></div>
<div class="a" style="left:294px;top:57px;width:192px;height:333.5px;background:#fff;border:1px solid #c6c6c6;box-shadow:-1px 2px 4px -1px rgba(0,0,0,0.3);"></div>
<div class="a" style="left:296px;top:58px;width:189px;height:47.5px;background:#d1d1d1;"></div>
<svg class="a" style="left:312px;top:71px;" width="32" height="28" viewBox="0 0 32 28"><rect x="0.5" y="0.5" width="27.0" height="21.0" fill="#fff"/><path d="M0.5 0.5 V21.5 M7.5 0.5 V21.5 M20.5 0.5 V21.5 M27.5 0.5 V21.5 M0.5 0.5 H27.5 M0.5 7.5 H27.5 M0.5 14.5 H27.5 M0.5 21.5 H27.5 " stroke="#444" stroke-width="1" fill="none" shape-rendering="crispEdges"/><rect x="7.5" y="7.5" width="13" height="7" fill="#fce4b0" stroke="#e8820c" stroke-width="1.2"/><rect x="11" y="12" width="17" height="10" fill="#fff"/><rect x="12.5" y="13.5" width="17" height="13" fill="#fcfcfc" stroke="#333" stroke-width="1.1"/><path d="M24.3 16.5 L18.2 19 L24.3 21.5 M18.2 24 H24.3" fill="none" stroke="#333" stroke-width="1.1"/></svg>
<span class="t" style="transform:scaleX(0.9391);transform-origin:0 50%;left:348.9px;top:75.6px;font-size:11.9px;line-height:18px;color:#222;font-weight:bold;"><u>H</u>ighlight Cells Rules</span>
<svg class="a" style="left:470.0px;top:76px;" width="8" height="12" viewBox="0 0 8 12"><path d="M1.2 1.6 L5.8 6 L1.2 10.4" fill="none" stroke="#444" stroke-width="1.1"/></svg>
<svg class="a" style="left:312px;top:119px;" width="32" height="28" viewBox="0 0 32 28"><rect x="0.5" y="0.5" width="27" height="21" fill="#fafafa"/><path d="M0.5 0.5 H27.5 V21.5 H0.5 Z M0.5 7.5 H27.5 M0.5 14.5 H27.5" fill="none" stroke="#444" stroke-width="1" shape-rendering="crispEdges"/><rect x="7.5" y="0.5" width="13" height="21" fill="#fbe0a4"/><path d="M7.5 0.5 H20.5" stroke="#444" stroke-width="1" shape-rendering="crispEdges"/><path d="M7.5 0.5 V21.5 M20.5 0.5 V21.5" stroke="#e8820c" stroke-width="1.2"/><path d="M14 13.5 V3 M9.8 7.2 L14 3 L18.2 7.2" fill="none" stroke="#333" stroke-width="1.1"/><rect x="11" y="12" width="17" height="10" fill="#fff"/><rect x="12.5" y="13.5" width="17" height="13" fill="#fcfcfc" stroke="#333" stroke-width="1.1"/><text x="21.2" y="24.3" font-size="10.5" text-anchor="middle" fill="#555" font-family="Liberation Sans, sans-serif" letter-spacing="-0.5">10</text></svg>
<span class="t" style="transform:scaleX(0.9979);transform-origin:0 50%;left:348.9px;top:123.6px;font-size:11.9px;line-height:18px;color:#222;font-weight:bold;"><u>T</u>op/Bottom Rules</span>
<svg class="a" style="left:470.0px;top:123.5px;" width="8" height="12" viewBox="0 0 8 12"><path d="M1.2 1.6 L5.8 6 L1.2 10.4" fill="none" stroke="#444" stroke-width="1.1"/></svg>
<div class="a" style="left:340px;top:155px;width:144px;height:1px;background:#dcdcdc;"></div>
<svg class="a" style="left:312px;top:170px;" width="29" height="23" viewBox="0 0 29 23"><rect x="0.5" y="0.5" width="27" height="21" fill="#fafafa"/><path d="M0.5 0.5 H27.5 V21.5 H0.5 Z M0.5 7.5 H27.5 M0.5 14.5 H27.5 M5.5 0.5 V21.5 M22.5 0.5 V21.5" fill="none" stroke="#444" stroke-width="1" shape-rendering="crispEdges"/><rect x="5.5" y="0.5" width="8.5" height="7" fill="#7fb6ec" stroke="#1e6fc8" stroke-width="1"/><rect x="5.5" y="7.5" width="3.2" height="7" fill="#7fb6ec" stroke="#1e6fc8" stroke-width="1"/><rect x="5.5" y="14.5" width="6.3" height="7" fill="#7fb6ec" stroke="#1e6fc8" stroke-width="1"/></svg>
<span class="t" style="transform:scaleX(0.9454);transform-origin:0 50%;left:348.9px;top:175.0px;font-size:11.9px;line-height:18px;color:#222;font-weight:bold;"><u>D</u>ata Bars</span>
<svg class="a" style="left:470.0px;top:173.7px;" width="8" height="12" viewBox="0 0 8 12"><path d="M1.2 1.6 L5.8 6 L1.2 10.4" fill="none" stroke="#444" stroke-width="1.1"/></svg>
<svg class="a" style="left:312px;top:218px;" width="29" height="23" viewBox="0 0 29 23"><rect x="0.5" y="0.5" width="27" height="21" fill="#fafafa"/><path d="M0.5 0.5 H27.5 V21.5 H0.5 Z M0.5 7.5 H27.5 M0.5 14.5 H27.5 M5.5 0.5 V21.5 M22.5 0.5 V21.5" fill="none" stroke="#444" stroke-width="1" shape-rendering="crispEdges"/><rect x="5.5" y="0.5" width="17" height="7" fill="#8dbdee" stroke="#1e6fc8" stroke-width="1"/><rect x="5.5" y="14.5" width="17" height="7" fill="#f9a0a6" stroke="#e8202a" stroke-width="1"/><rect x="5.5" y="7.5" width="17" height="7" fill="#fbdf9a" stroke="#e8820c" stroke-width="1"/></svg>
<span class="t" style="transform:scaleX(0.9089);transform-origin:0 50%;left:348.9px;top:222.6px;font-size:11.9px;line-height:18px;color:#222;font-weight:bold;">Color <u>S</u>cales</span>
<svg class="a" style="left:312px;top:266px;" width="29" height="23" viewBox="0 0 29 23"><rect x="0.5" y="0.5" width="27" height="21" fill="#fafafa"/><path d="M0.5 0.5 H27.5 V21.5 H0.5 Z M0.5 7.5 H27.5 M0.5 14.5 H27.5 M5.5 0.5 V21.5 M22.5 0.5 V21.5" fill="none" stroke="#444" stroke-width="1" shape-rendering="crispEdges"/><circle cx="9" cy="4" r="1.4" fill="#2b7cd3"/><circle cx="9" cy="11" r="1.4" fill="#e8433a"/><circle cx="9" cy="18" r="1.4" fill="#2b7cd3"/><path d="M15.5 4 H20.5 M15.5 11 H20.5 M15.5 18 H20.5" stroke="#555" stroke-width="1.1"/></svg>
<span class="t" style="transform:scaleX(0.9532);transform-origin:0 50%;left:348.9px;top:270.8px;font-size:11.9px;line-height:18px;color:#222;font-weight:bold;"><u>I</u>con Sets</span>
<svg class="a" style="left:470.0px;top:270.4px;" width="8" height="12" viewBox="0 0 8 12"><path d="M1.2 1.6 L5.8 6 L1.2 10.4" fill="none" stroke="#444" stroke-width="1.1"/></svg>
<div class="a" style="left:296px;top:302px;width:188px;height:1px;background:#d8d8d8;"></div>
<svg class="a" style="left:308.3px;top:311.3px;" width="16" height="14" viewBox="0 0 16 14"><rect x="0.5" y="0.5" width="15" height="13" fill="#fff"/><rect x="4.5" y="4.5" width="7" height="5" fill="#fbd49a" stroke="#e8820c" stroke-width="1"/><path d="M0.5 0.5 H15.5 V13.5 H0.5 Z M0.5 4.5 H15.5 M0.5 9.5 H15.5 M4.5 0.5 V13.5 M11.5 0.5 V13.5" fill="none" stroke="#444" stroke-width="1" shape-rendering="crispEdges"/><rect x="4.5" y="4.5" width="7" height="5" fill="#fbd49a" stroke="#e8820c" stroke-width="1"/></svg>
<span class="t" style="transform:scaleX(0.9501);transform-origin:0 50%;left:333.4px;top:309.5px;font-size:11.9px;line-height:18px;color:#262626;font-weight:normal;"><u>N</u>ew Rule...</span>
<svg class="a" style="left:308.3px;top:339.3px;" width="18" height="16" viewBox="0 0 18 16"><rect x="0.5" y="0.5" width="15" height="13" fill="#fff"/><path d="M0.5 0.5 H15.5 V13.5 H0.5 Z M0.5 4.5 H15.5 M0.5 9.5 H15.5 M4.5 0.5 V13.5 M11.5 0.5 V13.5" fill="none" stroke="#444" stroke-width="1" shape-rendering="crispEdges"/><rect x="4.5" y="4.5" width="7" height="5" fill="#fbd49a" stroke="#e8820c" stroke-width="1"/><path d="M8 13 L13.5 7.5 L16.8 10.8 L11.3 16.3 Z" fill="#fff" stroke="#fff" stroke-width="3" transform="translate(-0.5,-1.5)"/><path d="M8 13 L13.5 7.5 L16.8 10.8 L11.3 16.3 Z" fill="#ecd2f4" stroke="#9b3fb5" stroke-width="1.2" transform="translate(-0.5,-1.5)"/><path d="M10 11 L13.3 14.3" stroke="#9b3fb5" stroke-width="1" transform="translate(-0.5,-1.5)"/></svg>
<span class="t" style="transform:scaleX(0.9256);transform-origin:0 50%;left:333.4px;top:337.6px;font-size:11.9px;line-height:18px;color:#262626;font-weight:normal;"><u>C</u>lear Rules</span>
<svg class="a" style="left:470.0px;top:340px;" width="8" height="12" viewBox="0 0 8 12"><path d="M1.2 1.6 L5.8 6 L1.2 10.4" fill="none" stroke="#444" stroke-width="1.1"/></svg>
<svg class="a" style="left:308.3px;top:366px;" width="17" height="16" viewBox="0 0 17 16"><path d="M0.5 12 V0.5 H12" fill="none" stroke="#444" stroke-width="1" shape-rendering="crispEdges"/><rect x="2.5" y="2.5" width="13" height="12" fill="#fff"/><rect x="6.5" y="6.5" width="5" height="4" fill="#fbd49a" stroke="#e8820c" stroke-width="1"/><path d="M2.5 2.5 H15.5 V14.5 H2.5 Z M2.5 6.5 H15.5 M2.5 10.5 H15.5 M6.5 2.5 V14.5 M11.5 2.5 V14.5" fill="none" stroke="#444" stroke-width="1" shape-rendering="crispEdges"/><rect x="6.5" y="6.5" width="5" height="4" fill="#fbd49a" stroke="#e8820c" stroke-width="1"/></svg>
<span class="t" style="transform:scaleX(0.9502);transform-origin:0 50%;left:333.4px;top:365.4px;font-size:11.9px;line-height:18px;color:#262626;font-weight:normal;">Manage <u>R</u>ules...</span>
<div class="a" style="left:484px;top:57px;width:190px;height:372.5px;background:#fff;border:1px solid #c0c0c0;box-shadow:0 3px 4px -2px rgba(0,0,0,0.3);"></div>
<svg class="a" style="left:502px;top:73px;" width="32" height="28" viewBox="0 0 32 28"><rect x="0.5" y="0.5" width="27.0" height="21.0" fill="#fff"/><path d="M0.5 0.5 V21.5 M7.5 0.5 V21.5 M20.5 0.5 V21.5 M27.5 0.5 V21.5 M0.5 0.5 H27.5 M0.5 7.5 H27.5 M0.5 14.5 H27.5 M0.5 21.5 H27.5 " stroke="#444" stroke-width="1" fill="none" shape-rendering="crispEdges"/><rect x="7.5" y="7.5" width="13" height="7" fill="#fce4b0" stroke="#e8820c" stroke-width="1.2"/><rect x="11" y="12" width="17" height="10" fill="#fff"/><rect x="12.5" y="13.5" width="17" height="13" fill="#fcfcfc" stroke="#333" stroke-width="1.1"/><path d="M18.2 16.6 L24.6 20 L18.2 23.4" fill="none" stroke="#333" stroke-width="1.1"/></svg>
<span class="t" style="transform:scaleX(0.9890);transform-origin:0 50%;left:539.2px;top:77.8px;font-size:11.9px;line-height:18px;color:#222;font-weight:bold;"><u>G</u>reater Than...</span>
<svg class="a" style="left:502px;top:121px;" width="32" height="28" viewBox="0 0 32 28"><rect x="0.5" y="0.5" width="27.0" height="21.0" fill="#fff"/><path d="M0.5 0.5 V21.5 M7.5 0.5 V21.5 M20.5 0.5 V21.5 M27.5 0.5 V21.5 M0.5 0.5 H27.5 M0.5 7.5 H27.5 M0.5 14.5 H27.5 M0.5 21.5 H27.5 " stroke="#444" stroke-width="1" fill="none" shape-rendering="crispEdges"/><rect x="7.5" y="7.5" width="13" height="7" fill="#fce4b0" stroke="#e8820c" stroke-width="1.2"/><rect x="11" y="12" width="17" height="10" fill="#fff"/><rect x="12.5" y="13.5" width="17" height="13" fill="#fcfcfc" stroke="#333" stroke-width="1.1"/><path d="M24.6 16.6 L18.2 20 L24.6 23.4" fill="none" stroke="#333" stroke-width="1.1"/></svg>
<span class="t" style="transform:scaleX(0.9020);transform-origin:0 50%;left:539.2px;top:126.2px;font-size:11.9px;line-height:18px;color:#222;font-weight:bold;"><u>L</u>ess Than...</span>
<svg class="a" style="left:502px;top:169px;" width="29" height="23" viewBox="0 0 29 23"><rect x="0.5" y="0.5" width="27" height="21" fill="#fff"/><rect x="0.5" y="0.5" width="7" height="7" fill="#6faae6"/><rect x="20.5" y="0.5" width="7" height="7" fill="#6faae6"/><path d="M0.5 0.5 H27.5 V21.5 H0.5 Z M0.5 7.5 H27.5 M0.5 14.5 H27.5 M7.5 0.5 V21.5 M20.5 0.5 V21.5" fill="none" stroke="#444" stroke-width="1" shape-rendering="crispEdges"/><rect x="7.5" y="7.5" width="13" height="7" fill="#fce4b0" stroke="#e8820c" stroke-width="1.2"/></svg>
<span class="t" style="transform:scaleX(1.0165);transform-origin:0 50%;left:539.2px;top:174.2px;font-size:11.9px;line-height:18px;color:#222;font-weight:bold;"><u>B</u>etween...</span>
<svg class="a" style="left:502px;top:217px;" width="32" height="28" viewBox="0 0 32 28"><rect x="0.5" y="0.5" width="27.0" height="21.0" fill="#fff"/><path d="M0.5 0.5 V21.5 M7.5 0.5 V21.5 M20.5 0.5 V21.5 M27.5 0.5 V21.5 M0.5 0.5 H27.5 M0.5 7.5 H27.5 M0.5 14.5 H27.5 M0.5 21.5 H27.5 " stroke="#444" stroke-width="1" fill="none" shape-rendering="crispEdges"/><rect x="7.5" y="7.5" width="13" height="7" fill="#fce4b0" stroke="#e8820c" stroke-width="1.2"/><rect x="11" y="12" width="17" height="10" fill="#fff"/><rect x="12.5" y="13.5" width="17" height="13" fill="#fcfcfc" stroke="#333" stroke-width="1.1"/><path d="M17.5 18.3 H25 M17.5 21.7 H25" fill="none" stroke="#333" stroke-width="1.1"/></svg>
<span class="t" style="transform:scaleX(0.9283);transform-origin:0 50%;left:539.2px;top:222.2px;font-size:11.9px;line-height:18px;color:#222;font-weight:bold;"><u>E</u>qual To...</span>
<svg class="a" style="left:502px;top:265px;" width="32" height="28" viewBox="0 0 32 28"><rect x="0.5" y="0.5" width="27.0" height="21.0" fill="#fff"/><path d="M0.5 0.5 V21.5 M7.5 0.5 V21.5 M20.5 0.5 V21.5 M27.5 0.5 V21.5 M0.5 0.5 H27.5 M0.5 7.5 H27.5 M0.5 14.5 H27.5 M0.5 21.5 H27.5 " stroke="#444" stroke-width="1" fill="none" shape-rendering="crispEdges"/><rect x="7.5" y="7.5" width="13" height="7" fill="#fce4b0" stroke="#e8820c" stroke-width="1.2"/><rect x="11" y="12" width="17" height="10" fill="#fff"/><rect x="12.5" y="13.5" width="17" height="13" fill="#fcfcfc" stroke="#333" stroke-width="1.1"/><text x="21.3" y="24.3" font-size="11" text-anchor="middle" fill="#333" font-family="Liberation Sans, sans-serif">a</text></svg>
<span class="t" style="transform:scaleX(0.9799);transform-origin:0 50%;left:539.2px;top:270.0px;font-size:11.9px;line-height:18px;color:#222;font-weight:bold;"><u>T</u>ext that Contains...</span>
<svg class="a" style="left:502px;top:313px;" width="32" height="28" viewBox="0 0 32 28"><rect x="0.5" y="0.5" width="27.0" height="21.0" fill="#fff"/><path d="M0.5 0.5 V21.5 M7.5 0.5 V21.5 M20.5 0.5 V21.5 M27.5 0.5 V21.5 M0.5 0.5 H27.5 M0.5 7.5 H27.5 M0.5 14.5 H27.5 M0.5 21.5 H27.5 " stroke="#444" stroke-width="1" fill="none" shape-rendering="crispEdges"/><rect x="7.5" y="7.5" width="13" height="7" fill="#fce4b0" stroke="#e8820c" stroke-width="1.2"/><rect x="14" y="12" width="17" height="16" fill="#fff"/><rect x="17" y="10.5" width="3.4" height="3" fill="#fff"/><rect x="24.8" y="10.5" width="3.4" height="3" fill="#fff"/><rect x="15.5" y="13.5" width="14" height="13" fill="#fcfcfc" stroke="#333" stroke-width="1.1"/><path d="M15.5 16.6 H29.5 M18.7 11.3 V15 M26.5 11.3 V15" stroke="#333" stroke-width="1.1" fill="none"/></svg>
<span class="t" style="transform:scaleX(0.9750);transform-origin:0 50%;left:539.2px;top:318.2px;font-size:11.9px;line-height:18px;color:#222;font-weight:bold;"><u>A</u> Date Occurring...</span>
<svg class="a" style="left:502px;top:361px;" width="29" height="23" viewBox="0 0 29 23"><rect x="0.5" y="0.5" width="27" height="21" fill="#fff"/><rect x="7.5" y="0.5" width="13" height="7" fill="#fce4b0"/><rect x="7.5" y="14.5" width="13" height="7" fill="#fce4b0"/><path d="M0.5 0.5 H27.5 V21.5 H0.5 Z M0.5 7.5 H27.5 M0.5 14.5 H27.5 M7.5 0.5 V21.5 M20.5 0.5 V21.5" fill="none" stroke="#444" stroke-width="1" shape-rendering="crispEdges"/><rect x="7.5" y="0.5" width="13" height="7" fill="#fce4b0" stroke="#e8820c" stroke-width="1.2"/><rect x="7.5" y="14.5" width="13" height="7" fill="#fce4b0" stroke="#e8820c" stroke-width="1.2"/></svg>
<span class="t" style="transform:scaleX(0.9644);transform-origin:0 50%;left:539.2px;top:365.6px;font-size:11.9px;line-height:18px;color:#222;font-weight:bold;"><u>D</u>uplicate Values...</span>
<div class="a" style="left:486px;top:397px;width:190px;height:1px;background:#d4d4d4;"></div>
<span class="t" style="transform:scaleX(0.9559);transform-origin:0 50%;left:523px;top:404.8px;font-size:11.9px;line-height:18px;color:#262626;font-weight:normal;"><u>M</u>ore Rules...</span>
<svg class="a" style="left:54px;top:1px;" width="59" height="31" viewBox="0 0 59 31"><rect x="1.5" y="1.5" width="56" height="28" fill="none" stroke="#ff0000" stroke-width="3"/></svg>
<svg class="a" style="left:290px;top:29px;" width="173" height="31" viewBox="0 0 173 31"><rect x="1.5" y="1.5" width="170" height="28" fill="none" stroke="#ff0000" stroke-width="3"/></svg>
<svg class="a" style="left:306px;top:63px;" width="176" height="41" viewBox="0 0 176 41"><rect x="1.5" y="1.5" width="173" height="38" fill="none" stroke="#ff0000" stroke-width="3"/></svg>
<svg class="a" style="left:494px;top:209px;" width="113" height="45" viewBox="0 0 113 45"><rect x="1.5" y="1.5" width="110" height="42" fill="none" stroke="#ff0000" stroke-width="3"/></svg>
<div class="a" style="left:26.799999999999997px;top:354.7px;width:29.0px;height:29.0px;background:#ff0000;border-radius:50%;"></div>
<span class="t" style="transform:translateX(-50%) scaleX(1.0000);transform-origin:50% 50%;left:41.3px;top:357.8px;font-size:17.2px;line-height:22px;color:#fff;font-weight:normal;-webkit-text-stroke:0.45px #fff;">1</span>
<div class="a" style="left:65.8px;top:33.9px;width:29.0px;height:29.0px;background:#ff0000;border-radius:50%;"></div>
<span class="t" style="transform:translateX(-50%) scaleX(1.0000);transform-origin:50% 50%;left:80.3px;top:37.0px;font-size:17.2px;line-height:22px;color:#fff;font-weight:normal;-webkit-text-stroke:0.1px #fff;">2</span>
<div class="a" style="left:248.89999999999998px;top:29.1px;width:29.0px;height:29.0px;background:#ff0000;border-radius:50%;"></div>
<span class="t" style="transform:translateX(-50%) scaleX(1.0000);transform-origin:50% 50%;left:263.4px;top:32.2px;font-size:17.2px;line-height:22px;color:#fff;font-weight:normal;-webkit-text-stroke:0.45px #fff;">3</span>
<div class="a" style="left:264.1px;top:72.0px;width:29.0px;height:29.0px;background:#ff0000;border-radius:50%;"></div>
<span class="t" style="transform:translateX(-50%) scaleX(1.0000);transform-origin:50% 50%;left:278.6px;top:75.1px;font-size:17.2px;line-height:22px;color:#fff;font-weight:normal;-webkit-text-stroke:0.45px #fff;">4</span>
<div class="a" style="left:459.6px;top:218.3px;width:29.0px;height:29.0px;background:#ff0000;border-radius:50%;"></div>
<span class="t" style="transform:translateX(-50%) scaleX(1.0000);transform-origin:50% 50%;left:474.1px;top:221.4px;font-size:17.2px;line-height:22px;color:#fff;font-weight:normal;-webkit-text-stroke:0.45px #fff;">5</span>
</div>
</body></html>
